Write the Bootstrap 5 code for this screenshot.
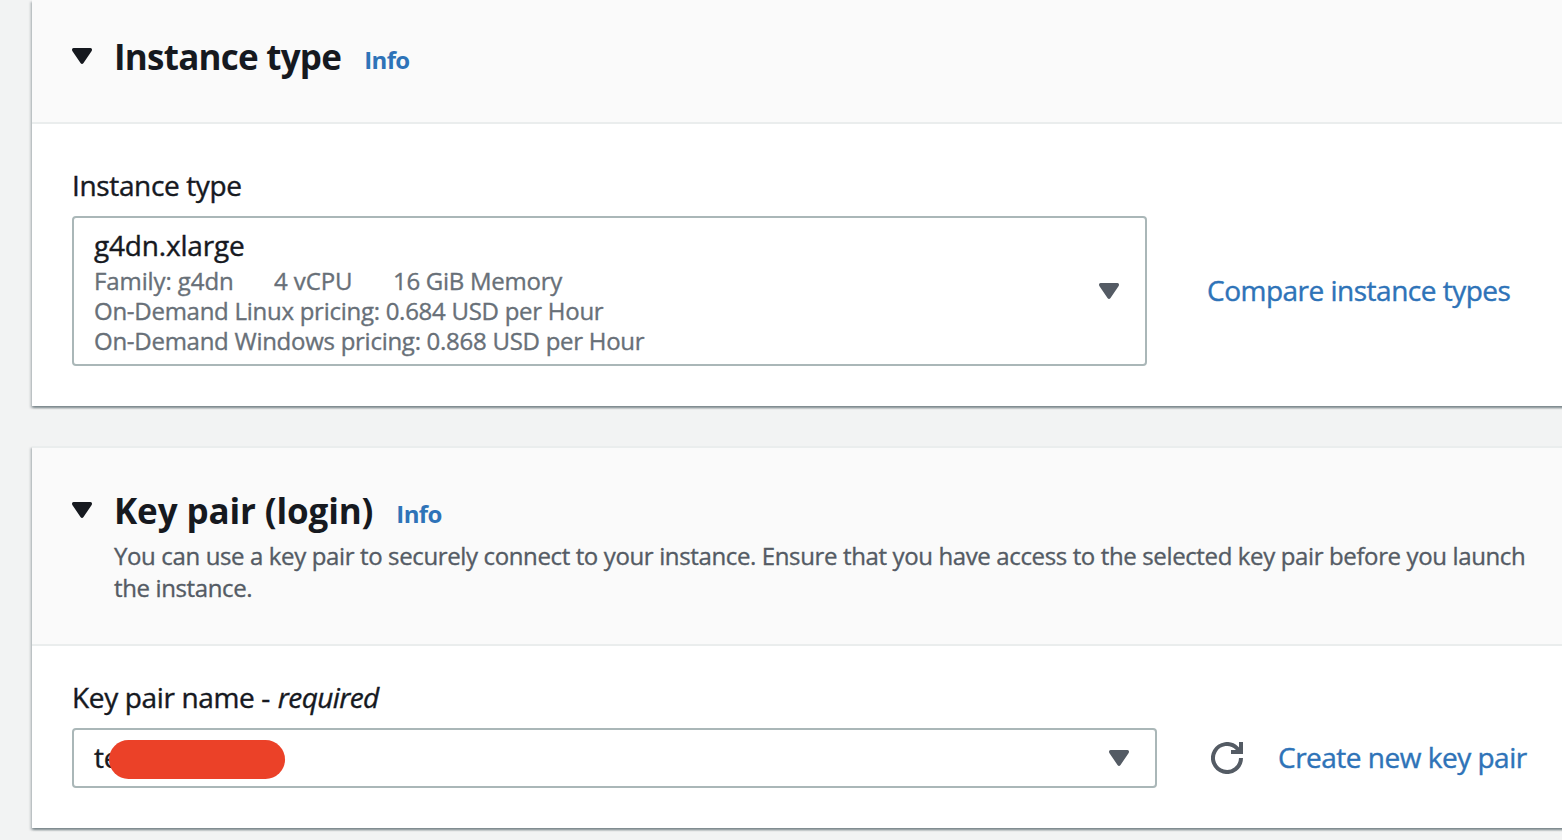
<!DOCTYPE html>
<html lang="en">
<head>
<meta charset="utf-8">
<title>Launch an instance</title>
<link href="https://cdn.jsdelivr.net/npm/bootstrap@5.3.0/dist/css/bootstrap.min.css" rel="stylesheet">
<style>
body{font-family:"Open Sans","Noto Sans",sans-serif;background:#f2f3f3;color:#16191f;overflow:hidden;height:840px;font-size:28px;-webkit-text-stroke:.4px currentColor}
a{color:#2e73b8;text-decoration:none}
.panel{border:0;border-radius:0;margin-left:32px;margin-right:-8px;background:#fff;box-shadow:0 2px 2px rgba(0,28,36,.3),2px 2px 2px rgba(0,28,36,.15),-2px 2px 2px rgba(0,28,36,.15)}
.panel-top{background:#fafafa;border-bottom:2px solid #eaeded;padding-left:40px}
.panel-one{height:406px}
.panel-one .panel-top{height:124px;padding-top:32px}
.panel-two{margin-top:40px;height:382px;border-top:2px solid #eaeded}
.panel-two .panel-top{height:198px;padding-top:38px}
.title{font-size:35px;font-weight:700;line-height:50px;margin:0 0 0 22px;-webkit-text-stroke:0}
.title-type{letter-spacing:-.76px}
.title-key{letter-spacing:-.13px}
.info{font-size:24px;font-weight:700;line-height:36px;margin:6px 0 0 23px;letter-spacing:-.6px;-webkit-text-stroke:0}
.caret{width:20px;height:16px;flex:none;display:block}
.panel-top .caret{margin-bottom:2px}
.desc{font-size:24px;line-height:32px;letter-spacing:-.37px;color:#545b64;margin:4px 0 0 42px;-webkit-text-stroke-width:.35px}
.fields-type{padding:43px 0 0 40px}
.fields-key{padding:33px 0 0 40px}
.lbl{line-height:36px;margin:0 0 13px;letter-spacing:-.36px}
.lbl em{letter-spacing:-.6px;margin-left:1px}
.pick{border:2px solid #aab7b8;border-radius:4px;padding:0 26px 0 20px;background:#fff}
.pick-type{width:1075px;height:150px}
.pick-key{width:1085px;height:60px}
.picked{line-height:38px;margin-bottom:2px;letter-spacing:-.18px}
.meta{font-size:24px;line-height:30px;letter-spacing:-.27px;color:#687078;-webkit-text-stroke-width:.35px}
.meta-family{width:180px;letter-spacing:-.1px}
.meta-cpu{width:119px;letter-spacing:-.1px}
.act{letter-spacing:-.5px;line-height:38px;margin-bottom:2px}
.act-compare{margin-left:60px}
.redact{left:35px;top:10px;width:176px;height:39px;border-radius:20px;background:#eb4128}
.reload{width:32px;height:32px;margin-left:54px;margin-right:35px}
</style>
</head>
<body>
<section class="card panel panel-one">
  <div class="panel-top">
    <div class="d-flex align-items-center">
      <svg class="caret" viewBox="0 0 20 16" fill="#16191f"><path d="M1.500 0h17Q20 0 20 1.500 20 2.500 19.500 3.200L11.500 15Q10 16.800 8.500 15L.5 3.200Q0 2.500 0 1.500 0 0 1.500 0z"/></svg>
      <h2 class="title title-type">Instance type</h2>
      <a class="info" href="#">Info</a>
    </div>
  </div>
  <div class="fields-type">
    <p class="lbl">Instance type</p>
    <div class="d-flex align-items-center">
      <div class="pick pick-type d-flex justify-content-between align-items-center">
        <div>
          <div class="picked">g4dn.xlarge</div>
          <div class="meta d-flex"><span class="meta-family">Family: g4dn</span><span class="meta-cpu">4 vCPU</span><span>16 GiB Memory</span></div>
          <div class="meta">On-Demand Linux pricing: 0.684 USD per Hour</div>
          <div class="meta">On-Demand Windows pricing: 0.868 USD per Hour</div>
        </div>
        <svg class="caret" viewBox="0 0 20 16" fill="#545b64"><path d="M1.500 0h17Q20 0 20 1.500 20 2.500 19.500 3.200L11.500 15Q10 16.800 8.500 15L.5 3.200Q0 2.500 0 1.500 0 0 1.500 0z"/></svg>
      </div>
      <a href="#" class="act act-compare">Compare instance types</a>
    </div>
  </div>
</section>
<section class="card panel panel-two">
  <div class="panel-top">
    <div class="d-flex align-items-center">
      <svg class="caret" viewBox="0 0 20 16" fill="#16191f"><path d="M1.500 0h17Q20 0 20 1.500 20 2.500 19.500 3.200L11.500 15Q10 16.800 8.500 15L.5 3.200Q0 2.500 0 1.500 0 0 1.500 0z"/></svg>
      <h2 class="title title-key">Key pair (login)</h2>
      <a class="info" href="#">Info</a>
    </div>
    <p class="desc">You can use a key pair to securely connect to your instance. Ensure that you have access to the selected key pair before you launch<br>the instance.</p>
  </div>
  <div class="fields-key">
    <p class="lbl">Key pair name - <em>required</em></p>
    <div class="d-flex align-items-center">
      <div class="pick pick-key position-relative d-flex justify-content-between align-items-center">
        <span class="picked">te</span>
        <span class="redact position-absolute"></span>
        <svg class="caret" viewBox="0 0 20 16" fill="#545b64"><path d="M1.500 0h17Q20 0 20 1.500 20 2.500 19.500 3.200L11.500 15Q10 16.800 8.500 15L.5 3.200Q0 2.500 0 1.500 0 0 1.500 0z"/></svg>
      </div>
      <svg class="reload" viewBox="0 0 32 32" fill="none" stroke="#545b64" stroke-width="4"><path d="M30 16A14 14 0 1 1 25.900 6.100L29 9.500M30 0v10H20"/></svg>
      <a href="#" class="act">Create new key pair</a>
    </div>
  </div>
</section>
<script src="https://cdn.jsdelivr.net/npm/bootstrap@5.3.0/dist/js/bootstrap.bundle.min.js"></script>
</body>
</html>
